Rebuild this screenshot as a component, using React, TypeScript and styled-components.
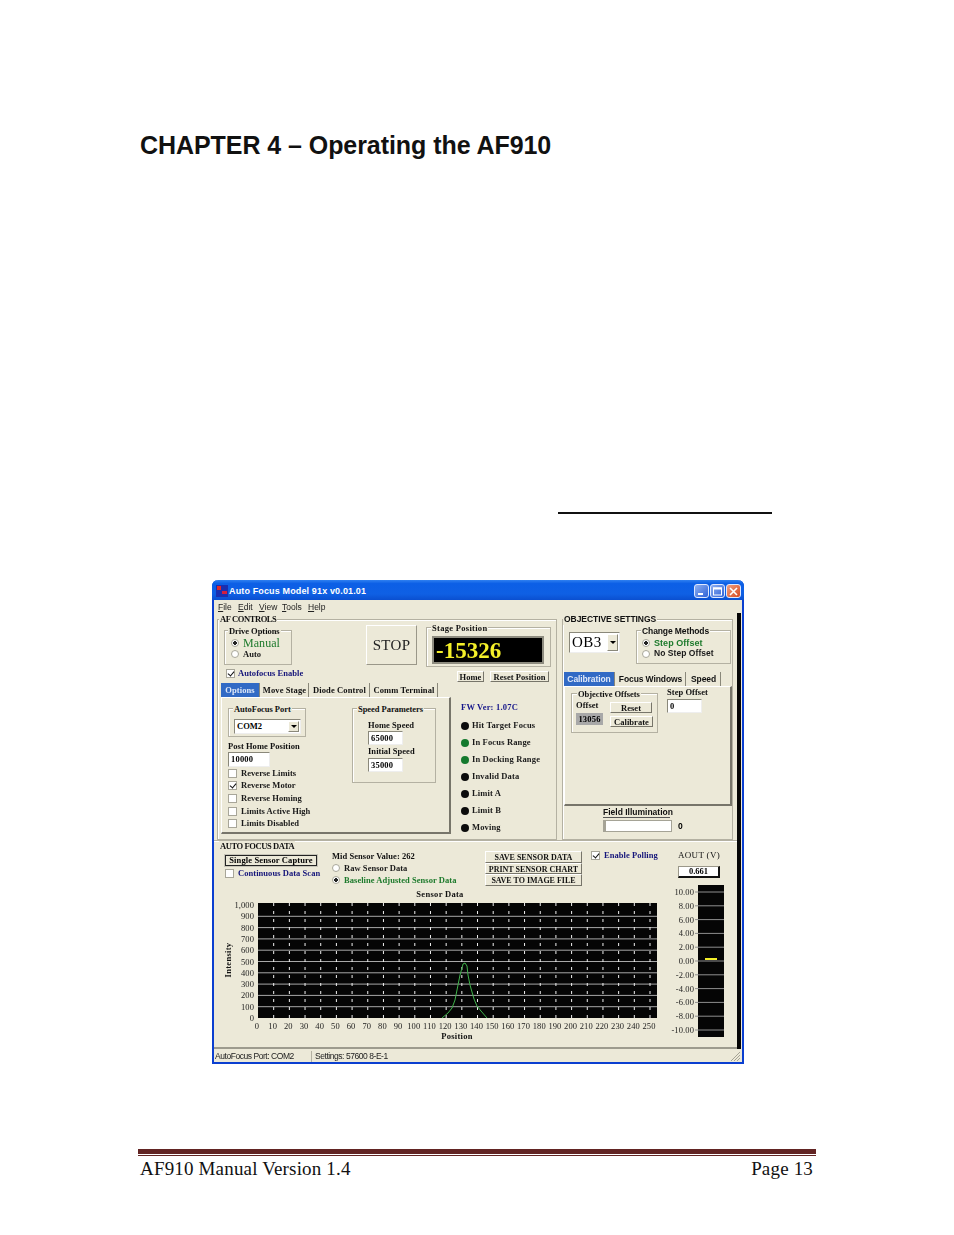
import React from 'react';
import styled, { createGlobalStyle } from 'styled-components';

const GlobalStyle = createGlobalStyle`
  html, body { margin: 0; padding: 0; background: #fff; }
  * { box-sizing: border-box; }
`;

const serif = `'Liberation Serif', 'Times New Roman', serif`;
const sans = `'Liberation Sans', Arial, sans-serif`;
const face = '#ece9d8';

const Page = styled.div`
  width: 954px;
  height: 1235px;
  overflow: hidden;
  display: flex;
  flex-direction: column;
  background: #fff;
  color: #000;
`;

const Heading = styled.h1`
  margin: 130px 0 0 140px;
  font: bold 25px/30px ${sans};
  letter-spacing: -0.06px;
  color: #111;
`;

const DocLine = styled.div`
  margin: 352px 0 0 558px;
  width: 214px;
  height: 2px;
  background: #111;
`;

const Window = styled.div`
  margin: 66px 0 0 212px;
  width: 532px;
  height: 484px;
  display: flex;
  flex-direction: column;
  background: ${face};
  border: solid #0b3fd0;
  border-width: 0 2px 2px;
  border-radius: 6px 6px 0 0;
  filter: blur(0.4px);
  font: bold 8.5px/11px ${serif};
`;

const TitleBar = styled.div`
  height: 20px;
  margin: 0 -2px;
  padding: 2px 3px 0 4px;
  display: flex;
  align-items: center;
  border-radius: 6px 6px 0 0;
  background: linear-gradient(#2f80f0 0, #0c5fe6 18%, #0f60e4 70%, #0a4fd0 100%);
  color: #fff;
  font: bold 9px/12px ${sans};
  letter-spacing: 0.14px;
`;

const TitleText = styled.span`
  margin-left: 1px;
  flex: 1;
`;

const CaptionBtn = styled.div<{ $close?: boolean }>`
  width: 15px;
  height: 14px;
  margin-left: 1px;
  border: 1px solid #dfe8ff;
  border-radius: 3px;
  background: ${(p) => (p.$close ? 'linear-gradient(135deg,#f0a080,#d84a20)' : 'linear-gradient(135deg,#8fb0f0,#2f62d8)')};
  display: flex;
  align-items: center;
  justify-content: center;
`;

const MenuBar = styled.div`
  height: 14px;
  padding: 1px 0 0 4px;
  display: flex;
  font: 8.5px/13px ${sans};
  color: #222;
`;

const MenuItem = styled.span<{ $w: number }>`
  width: ${(p) => p.$w}px;
  &::first-letter { text-decoration: underline; }
`;

const MainRow = styled.div`
  flex: 1;
  display: flex;
  min-height: 0;
`;

const Main = styled.div`
  width: 523px;
  display: flex;
  flex-direction: column;
`;

const BlackStrip = styled.div`
  width: 4px;
  margin: -1px 1px 0 0;
  background: #050505;
`;

const TopArea = styled.div`
  display: flex;
  gap: 5px;
  height: 226px;
  padding: 5px 0 0 3px;
`;

const Group = styled.div<{ $w?: number; $h?: number }>`
  position: relative;
  width: ${(p) => (p.$w ? `${p.$w}px` : 'auto')};
  height: ${(p) => (p.$h ? `${p.$h}px` : 'auto')};
  flex: none;
  border: 1px solid #b4b1a2;
  box-shadow: inset 1px 1px 0 #fff;
`;

const Legend = styled.span<{ $left?: number; $sans?: boolean; $top?: number; $ls?: number }>`
  position: absolute;
  top: ${(p) => p.$top ?? -5}px;
  left: ${(p) => p.$left ?? 6}px;
  padding: 0 1px;
  background: ${face};
  white-space: nowrap;
  color: #111;
  font-family: ${(p) => (p.$sans ? sans : serif)};
  letter-spacing: ${(p) => p.$ls ?? -0.05}px;
`;

const AfGroup = styled(Group)`
  width: 340px;
  height: 221px;
  padding: 5px 5px 0 6px;
`;

const AfTop = styled.div`
  display: flex;
  align-items: flex-start;
  height: 42px;
`;

const DriveGroup = styled(Group)`
  width: 68px;
  height: 35px;
  margin-top: 5px;
  padding: 6px 0 0 6px;
`;

const StopButton = styled.div`
  width: 52px;
  height: 40px;
  margin-left: 74px;
  display: flex;
  align-items: center;
  justify-content: center;
  font: 15px ${serif};
  letter-spacing: 0.3px;
  color: #222;
  border: 1px solid;
  border-color: #fff #9a9789 #9a9789 #fff;
`;

const StageGroup = styled(Group)`
  width: 125px;
  height: 40px;
  margin: 2px 0 0 9px;
  padding: 8px 0 0 5px;
`;

const Display = styled.div`
  width: 112px;
  height: 28px;
  padding: 1px 0 0 2px;
  background: #000;
  border: 2px solid #8e8c80;
  color: #f5f02a;
  font: bold 23px/24px ${serif};
`;

const AfSecond = styled.div`
  display: flex;
  height: 16px;
  justify-content: space-between;
  padding: 1px 2px 0 2px;
`;

const SmallButtons = styled.div`
  display: flex;
  gap: 6px;
  padding-top: 3px;
`;

const FlatButton = styled.div<{ $w: number }>`
  width: ${(p) => p.$w}px;
  height: 11px;
  text-align: center;
  line-height: 10px;
  white-space: nowrap;
  letter-spacing: 0.05px;
  color: #111;
  border: 1px solid;
  border-color: #fff #77756a #77756a #fff;
`;

const AfThird = styled.div`
  display: flex;
  margin-left: -3px;
`;

const TabSet = styled.div<{ $w: number }>`
  width: ${(p) => p.$w}px;
  flex: none;
`;

const TabRow = styled.div`
  display: flex;
  height: 14px;
`;

const Tab = styled.div<{ $w: number; $active?: boolean; $sans?: boolean }>`
  width: ${(p) => p.$w}px;
  margin-right: 1px;
  height: 14px;
  text-align: center;
  line-height: 14px;
  white-space: nowrap;
  letter-spacing: ${(p) => (p.$sans ? -0.1 : 0.1)}px;
  font-family: ${(p) => (p.$sans ? sans : serif)};
  background: ${(p) => (p.$active ? '#316ac5' : 'transparent')};
  color: ${(p) => (p.$active ? '#dfe8f8' : '#111')};
  border-right: 1px solid #8a887a;
`;

const TabPanel = styled.div<{ $h: number }>`
  height: ${(p) => p.$h}px;
  border: 1px solid;
  border-color: #fff #77756a #77756a #fff;
  border-width: 1px 2px 2px 1px;
`;

const OptionsPanel = styled(TabPanel)`
  display: flex;
  gap: 46px;
  padding: 10px 0 0 6px;
`;

const Column = styled.div<{ $w: number }>`
  width: ${(p) => p.$w}px;
  flex: none;
`;

const PortGroup = styled(Group)`
  width: 78px;
  height: 29px;
  padding: 10px 0 0 5px;
`;

const Sunken = styled.div<{ $w: number; $h?: number }>`
  width: ${(p) => p.$w}px;
  height: ${(p) => p.$h ?? 14}px;
  padding-left: 2px;
  background: #fff;
  border: 1px solid;
  border-color: #8a887a #eee #eee #8a887a;
  line-height: 12px;
  font-family: ${sans};
`;

const SerifInput = styled(Sunken)`
  font-family: ${serif};
  letter-spacing: 0.2px;
`;

const Select = styled(Sunken)`
  display: flex;
  justify-content: space-between;
  padding-right: 1px;
  font-family: ${serif};
  letter-spacing: 0;
`;

const BigSelect = styled(Select)`
  font: 15px/19px ${serif};
  letter-spacing: 0.4px;
  margin-top: 2px;
`;

const DropBtn = styled.span<{ $w: number }>`
  width: ${(p) => p.$w}px;
  margin: 1px 0;
  background: ${face};
  border: 1px solid;
  border-color: #fff #8a887a #8a887a #fff;
  display: flex;
  align-items: center;
  justify-content: center;
  &::after {
    content: '';
    border: 3px solid transparent;
    border-top-color: #000;
    border-bottom-width: 0;
  }
`;

const FieldLabel = styled.div<{ $h?: number; $mt?: number }>`
  height: ${(p) => p.$h ?? 12}px;
  margin-top: ${(p) => p.$mt ?? 0}px;
  line-height: ${(p) => p.$h ?? 12}px;
  white-space: nowrap;
  letter-spacing: 0.05px;
  color: #111;
`;

const Option = styled.div<{ $color?: string; $h?: number; $gap?: number; $sans?: boolean; $size?: number; $regular?: boolean }>`
  display: flex;
  align-items: center;
  height: ${(p) => p.$h ?? 12.6}px;
  gap: ${(p) => p.$gap ?? 4}px;
  white-space: nowrap;
  letter-spacing: 0.05px;
  color: ${(p) => p.$color ?? '#1a1a1a'};
  font-family: ${(p) => (p.$sans ? sans : serif)};
  font-size: ${(p) => p.$size ?? 8.5}px;
  font-weight: ${(p) => (p.$regular ? 'normal' : 'bold')};
`;

const CheckBox = styled.span<{ $on?: boolean }>`
  flex: none;
  width: 9px;
  height: 9px;
  background: #fff;
  border: 1px solid #a8a699;
  position: relative;
  ${(p) =>
    p.$on &&
    `&::after {
      content: '';
      position: absolute;
      left: 2px;
      top: 0;
      width: 3px;
      height: 5px;
      border: solid #111;
      border-width: 0 1.5px 1.5px 0;
      transform: rotate(40deg);
    }`}
`;

const RadioDot = styled.span<{ $on?: boolean }>`
  flex: none;
  width: 8px;
  height: 8px;
  border-radius: 50%;
  background: ${(p) => (p.$on ? 'radial-gradient(circle, #222 0 1.6px, #fff 2px)' : '#fff')};
  border: 1px solid #a8a699;
`;

const SpeedGroup = styled(Group)`
  width: 84px;
  height: 75px;
  padding: 10px 0 0 15px;
`;

const LedColumn = styled.div`
  margin-left: 10px;
  padding-top: 18px;
`;

const FwVersion = styled.div`
  height: 12px;
  margin-bottom: 4px;
  line-height: 12px;
  color: #16168a;
  letter-spacing: 0.2px;
`;

const LedRow = styled.div`
  display: flex;
  align-items: center;
  gap: 3px;
  height: 17px;
  white-space: nowrap;
  letter-spacing: 0.15px;
  color: #1a1a1a;
`;

const Led = styled.span<{ $on?: boolean }>`
  width: 8px;
  height: 8px;
  border-radius: 50%;
  background: ${(p) => (p.$on ? '#157a2e' : '#0c0c0c')};
`;

const ObjGroup = styled(Group)`
  width: 171px;
  height: 221px;
  padding: 10px 0 0 6px;
  font-family: ${sans};
`;

const ObjTop = styled.div`
  display: flex;
  gap: 16px;
`;

const MethodGroup = styled(Group)`
  width: 95px;
  height: 34px;
  padding: 7px 0 0 5px;
`;

const ObjTabs = styled(TabSet)`
  margin: 8px 0 0 -5px;
`;

const CalPanel = styled(TabPanel)`
  display: flex;
  padding: 6px 0 0 6px;
  font-family: ${serif};
`;

const OffsetsGroup = styled(Group)`
  width: 87px;
  height: 40px;
  padding: 8px 0 0 4px;
  display: flex;
  gap: 7px;
`;

const OffsetValue = styled.div`
  width: 27px;
  height: 12px;
  margin-top: 3px;
  background: #a8a8a8;
  text-align: center;
  line-height: 12px;
  letter-spacing: 0.2px;
`;

const StepColumn = styled.div`
  margin: -7px 0 0 9px;
`;

const ButtonStack = styled.div<{ $gap: number }>`
  display: flex;
  flex-direction: column;
  gap: ${(p) => p.$gap}px;
`;

const Illumination = styled.div`
  margin-left: 34px;
`;

const IllumLabel = styled.div`
  width: 67px;
  height: 12px;
  line-height: 12px;
  text-align: center;
  border-bottom: 1px solid #555;
  white-space: nowrap;
  color: #111;
`;

const SliderRow = styled.div`
  display: flex;
  align-items: center;
  gap: 6px;
  margin-top: 2px;
`;

const Slider = styled.div`
  width: 69px;
  height: 12px;
  background: #fff;
  border: 1px solid #a5a396;
  border-left: 3px solid #a5a396;
`;

const DataArea = styled.div`
  position: relative;
  flex: 1;
  display: flex;
  border-top: 1px solid #b4b1a2;
  border-bottom: 2px solid #9d9b8e;
  box-shadow: inset 0 1px 0 #fff;
`;

const DataLeft = styled.div`
  width: 462px;
  flex: none;
`;

const Controls = styled.div`
  display: flex;
  height: 48px;
  padding: 10px 0 0 11px;
`;

const SingleCol = styled.div`
  width: 107px;
  padding-top: 4px;
`;

const SingleButton = styled.div`
  width: 92px;
  height: 11px;
  margin-bottom: 1px;
  border: 1px solid #222;
  outline: 1px solid #c7c5b8;
  text-align: center;
  line-height: 9px;
  white-space: nowrap;
  letter-spacing: 0.12px;
  overflow: hidden;
`;

const MidCol = styled.div`
  width: 153px;
`;

const SaveCol = styled.div`
  width: 106px;
  display: flex;
  flex-direction: column;
`;

const SaveButton = styled.div`
  width: 97px;
  height: 11.5px;
  text-align: center;
  font-size: 8px;
  line-height: 11px;
  white-space: nowrap;
  color: #111;
  border: 1px solid;
  border-color: #fff #77756a #77756a #fff;
`;

const ChartSvg = styled.svg`
  display: block;
  margin-left: 8px;
`;

const AxisText = styled.text`
  font: 8.5px ${serif};
  fill: #1c1c1c;
  letter-spacing: 0.1px;
`;

const AxisTitle = styled.text`
  font: bold 8.5px ${serif};
  fill: #111;
  letter-spacing: 0.3px;
`;

const DataRight = styled.div`
  flex: 1;
  display: flex;
  flex-direction: column;
  padding: 8px 0 0 2px;
`;

const AoutLabel = styled.div`
  height: 12px;
  font: 9px/12px ${serif};
  letter-spacing: 0.3px;
  color: #111;
`;

const AoutValue = styled.div`
  width: 42px;
  height: 12px;
  margin: 5px 0 7px;
  background: #fff;
  border: 1px solid #9a9789;
  border-right: 2px solid #111;
  border-bottom: 2px solid #111;
  text-align: center;
  line-height: 9px;
`;

const LevelSvg = styled.svg`
  display: block;
  margin-left: -8px;
`;

const StatusBar = styled.div`
  height: 13px;
  padding-top: 2px;
  display: flex;
  align-items: center;
  font: 8.5px/11px ${sans};
  letter-spacing: -0.45px;
  color: #222;
`;

const StatusCell = styled.div<{ $w: number }>`
  width: ${(p) => p.$w}px;
  padding-left: 1px;
  border-right: 1px solid #b4b1a2;
  white-space: nowrap;
`;

const StatusFill = styled.div`
  flex: 1;
  padding-left: 3px;
  white-space: nowrap;
`;

const Grip = styled.svg`
  display: block;
  margin: -2px 1px 0 0;
`;

const FooterRule = styled.div`
  margin: 85px 0 0 138px;
  width: 678px;
  height: 7px;
  border-top: 5px solid #622423;
  border-bottom: 1px solid #622423;
`;

const Footer = styled.div`
  margin: 2px 141px 0 140px;
  display: flex;
  justify-content: space-between;
  font: 19px/22px ${serif};
  letter-spacing: 0.17px;
  color: #111;
`;

const menu: [string, number][] = [['File', 20], ['Edit', 21], ['View', 23], ['Tools', 26], ['Help', 20]];
const afChecks: [string, boolean][] = [
  ['Reverse Limits', false],
  ['Reverse Motor', true],
  ['Reverse Homing', false],
  ['Limits Active High', false],
  ['Limits Disabled', false],
];
const leds: [string, boolean][] = [
  ['Hit Target Focus', false],
  ['In Focus Range', true],
  ['In Docking Range', true],
  ['Invalid Data', false],
  ['Limit A', false],
  ['Limit B', false],
  ['Moving', false],
];

const curve =
  '442,1018 448,1013 452,1008 455,1000 458,985 460,975 462,968 463,964 465,963 467,966 468,975 470,985 472,992 474,999 477,1006 481,1011 487,1018';

// chart svg origin on the page is x 222, y 889
const SensorChart = () => {
  const ox = 222;
  const oy = 889;
  const rows = Array.from({ length: 11 }, (_, i) => i);
  const cols = Array.from({ length: 26 }, (_, i) => i);
  const rowY = (i: number) => 1018 - oy - i * 11.3;
  const colX = (i: number) => 258 - ox + i * 15.68;
  const yLabel = (i: number) => (i === 10 ? '1,000' : i === 3 ? '300' : String(i * 100));
  return (
    <ChartSvg width={440} height={153} viewBox="0 0 440 153">
      <AxisTitle x={218} y={8} textAnchor="middle">Sensor Data</AxisTitle>
      <rect x={36} y={14} width={399} height={115} fill="#050505" />
      {rows.map((i) =>
        i > 0 && i < 10 ? (
          <line key={i} x1={36} x2={435} y1={rowY(i)} y2={rowY(i)} stroke="#a8a8a8" />
        ) : null,
      )}
      {cols.map((i) =>
        i > 0 && i < 26 ? (
          <line key={i} x1={colX(i)} x2={colX(i)} y1={14} y2={129} stroke="#f0f0f0" strokeDasharray="3 5" />
        ) : null,
      )}
      <polyline
        points={curve
          .split(' ')
          .map((p) => {
            const [x, y] = p.split(',').map(Number);
            return `${x - ox},${y - oy}`;
          })
          .join(' ')}
        fill="none"
        stroke="#3fb24a"
        strokeWidth={1}
      />
      {rows.map((i) => (
        <AxisText key={i} x={32} y={rowY(i) + 3} textAnchor="end">{yLabel(i)}</AxisText>
      ))}
      {cols.map((i) => (
        <AxisText key={i} x={colX(i) - 1} y={140} textAnchor="middle">{i * 10}</AxisText>
      ))}
      <AxisTitle x={235} y={150} textAnchor="middle">Position</AxisTitle>
      <AxisTitle transform="translate(9 71) rotate(-90)" textAnchor="middle">Intensity</AxisTitle>
    </ChartSvg>
  );
};

const LevelBar = () => {
  const labels = ['10.00', '8.00', '6.00', '4.00', '2.00', '0.00', '-2.00', '-4.00', '-6.00', '-8.00', '-10.00'];
  return (
    <LevelSvg width={56} height={152} viewBox="0 0 56 152">
      <rect x={28} y={0} width={26} height={152} fill="#050505" />
      {labels.map((l, i) => {
        const y = 7 + i * 13.8;
        return (
          <g key={l}>
            <line x1={25} x2={54} y1={y} y2={y} stroke="#8f8f8f" />
            <AxisText x={24} y={y + 3} textAnchor="end">{l}</AxisText>
          </g>
        );
      })}
      <rect x={35} y={73} width={12} height={2} fill="#f2ee2a" />
    </LevelSvg>
  );
};

const AppIcon = () => (
  <svg width={12} height={12} viewBox="0 0 12 12">
    <rect width={12} height={12} fill="#1a2fb0" />
    <rect x={1} y={1} width={4} height={4} fill="#e02a2a" />
    <rect x={6} y={6} width={5} height={3} fill="#d02040" />
  </svg>
);

export default function App() {
  return (
    <Page>
      <GlobalStyle />
      <Heading>CHAPTER 4 – Operating the AF910</Heading>
      <DocLine />
      <Window>
        <TitleBar>
          <AppIcon />
          <TitleText>Auto Focus Model 91x v0.01.01</TitleText>
          <CaptionBtn>
            <svg width={9} height={9} viewBox="0 0 9 9"><rect x={1} y={6} width={5} height={2} fill="#fff" /></svg>
          </CaptionBtn>
          <CaptionBtn>
            <svg width={9} height={9} viewBox="0 0 9 9"><rect x={0.5} y={1} width={8} height={7} fill="none" stroke="#fff" /><rect x={0} y={0.5} width={9} height={2} fill="#fff" /></svg>
          </CaptionBtn>
          <CaptionBtn $close>
            <svg width={9} height={9} viewBox="0 0 9 9"><path d="M1 1l7 7M8 1l-7 7" stroke="#fff" strokeWidth={1.6} /></svg>
          </CaptionBtn>
        </TitleBar>
        <MenuBar>
          {menu.map(([m, w]) => (
            <MenuItem key={m} $w={w}>{m}</MenuItem>
          ))}
        </MenuBar>
        <MainRow>
          <Main>
            <TopArea>
              <AfGroup>
                <Legend $left={1} $top={-6} $ls={-0.4}>AF CONTROLS</Legend>
                <AfTop>
                  <DriveGroup>
                    <Legend $left={3}>Drive Options</Legend>
                    <Option $h={12} $color="#1d7a2c" $size={12} $regular><RadioDot $on />Manual</Option>
                    <Option $h={10}><RadioDot />Auto</Option>
                  </DriveGroup>
                  <StopButton>STOP</StopButton>
                  <StageGroup>
                    <Legend $left={4} $ls={0.3}>Stage Position</Legend>
                    <Display>-15326</Display>
                  </StageGroup>
                </AfTop>
                <AfSecond>
                  <Option $h={11} $color="#15157a" $gap={3}><CheckBox $on />Autofocus Enable</Option>
                  <SmallButtons>
                    <FlatButton $w={27}>Home</FlatButton>
                    <FlatButton $w={59}>Reset Position</FlatButton>
                  </SmallButtons>
                </AfSecond>
                <AfThird>
                  <TabSet $w={230}>
                    <TabRow>
                      <Tab $w={39} $active>Options</Tab>
                      <Tab $w={48}>Move Stage</Tab>
                      <Tab $w={60}>Diode Control</Tab>
                      <Tab $w={67}>Comm Terminal</Tab>
                    </TabRow>
                    <OptionsPanel $h={137}>
                      <Column $w={78}>
                        <PortGroup>
                          <Legend $left={4}>AutoFocus Port</Legend>
                          <Select $w={67} $h={15}>COM2<DropBtn $w={11} /></Select>
                        </PortGroup>
                        <FieldLabel $h={11} $mt={4}>Post Home Position</FieldLabel>
                        <SerifInput $w={42} $h={15}>10000</SerifInput>
                        {afChecks.map(([t, on]) => (
                          <Option key={t}><CheckBox $on={on} />{t}</Option>
                        ))}
                      </Column>
                      <Column $w={84}>
                        <SpeedGroup>
                          <Legend $left={4}>Speed Parameters</Legend>
                          <FieldLabel>Home Speed</FieldLabel>
                          <SerifInput $w={35}>65000</SerifInput>
                          <FieldLabel $h={13}>Initial Speed</FieldLabel>
                          <SerifInput $w={35}>35000</SerifInput>
                        </SpeedGroup>
                      </Column>
                    </OptionsPanel>
                  </TabSet>
                  <LedColumn>
                    <FwVersion>FW Ver: 1.07C</FwVersion>
                    {leds.map(([t, on]) => (
                      <LedRow key={t}><Led $on={on} />{t}</LedRow>
                    ))}
                  </LedColumn>
                </AfThird>
              </AfGroup>
              <ObjGroup>
                <Legend $left={0} $top={-6} $sans $ls={-0.05}>OBJECTIVE SETTINGS</Legend>
                <ObjTop>
                  <BigSelect $w={51} $h={21}>OB3<DropBtn $w={11} /></BigSelect>
                  <MethodGroup>
                    <Legend $left={4} $sans $ls={-0.1}>Change Methods</Legend>
                    <Option $h={10} $color="#1d7a2c" $sans $size={9}><RadioDot $on />Step Offset</Option>
                    <Option $h={11} $sans $gap={4}><RadioDot />No Step Offset</Option>
                  </MethodGroup>
                </ObjTop>
                <ObjTabs $w={168}>
                  <TabRow>
                    <Tab $w={51} $active $sans>Calibration</Tab>
                    <Tab $w={70} $sans>Focus Windows</Tab>
                    <Tab $w={34} $sans>Speed</Tab>
                  </TabRow>
                  <CalPanel $h={120}>
                    <OffsetsGroup>
                      <Legend $left={5}>Objective Offsets</Legend>
                      <div>
                        <FieldLabel $h={10} $mt={-2}>Offset</FieldLabel>
                        <OffsetValue>13056</OffsetValue>
                      </div>
                      <ButtonStack $gap={3}>
                        <FlatButton $w={42}>Reset</FlatButton>
                        <FlatButton $w={43}>Calibrate</FlatButton>
                      </ButtonStack>
                    </OffsetsGroup>
                    <StepColumn>
                      <FieldLabel $h={13}>Step Offset</FieldLabel>
                      <SerifInput $w={35}>0</SerifInput>
                    </StepColumn>
                  </CalPanel>
                </ObjTabs>
                <Illumination>
                  <IllumLabel>Field Illumination</IllumLabel>
                  <SliderRow>
                    <Slider />
                    <span>0</span>
                  </SliderRow>
                </Illumination>
              </ObjGroup>
            </TopArea>
            <DataArea>
              <Legend $left={5} $top={0} $ls={-0.4}>AUTO FOCUS DATA</Legend>
              <DataLeft>
                <Controls>
                  <SingleCol>
                    <SingleButton>Single Sensor Capture</SingleButton>
                    <Option $h={12} $color="#15157a"><CheckBox />Continuous Data Scan</Option>
                  </SingleCol>
                  <MidCol>
                    <FieldLabel $h={11}>Mid Sensor Value: 262</FieldLabel>
                    <Option $h={12}><RadioDot />Raw Sensor Data</Option>
                    <Option $h={12} $color="#1d7a2c"><RadioDot $on />Baseline Adjusted Sensor Data</Option>
                  </MidCol>
                  <SaveCol>
                    <SaveButton>SAVE SENSOR DATA</SaveButton>
                    <SaveButton>PRINT SENSOR CHART</SaveButton>
                    <SaveButton>SAVE TO IMAGE FILE</SaveButton>
                  </SaveCol>
                  <Option $h={9} $color="#15157a"><CheckBox $on />Enable Polling</Option>
                </Controls>
                <SensorChart />
              </DataLeft>
              <DataRight>
                <AoutLabel>AOUT (V)</AoutLabel>
                <AoutValue>0.661</AoutValue>
                <LevelBar />
              </DataRight>
            </DataArea>
          </Main>
          <BlackStrip />
        </MainRow>
        <StatusBar>
          <StatusCell $w={98}>AutoFocus Port: COM2</StatusCell>
          <StatusFill>Settings: 57600 8-E-1</StatusFill>
          <Grip width={12} height={12} viewBox="0 0 12 12">
            <path d="M11 2L2 11M11 5L5 11M11 8L8 11" stroke="#a5a396" />
          </Grip>
        </StatusBar>
      </Window>
      <FooterRule />
      <Footer>
        <span>AF910 Manual Version 1.4</span>
        <span>Page 13</span>
      </Footer>
    </Page>
  );
}
